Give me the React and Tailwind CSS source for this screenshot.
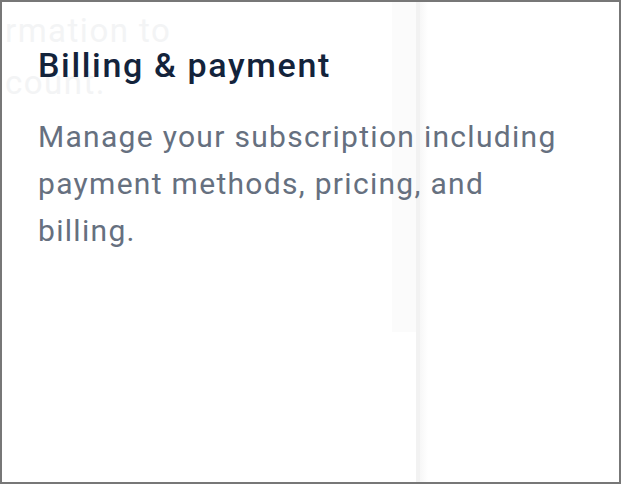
import React from "react";

const App = () => {
  return (
    <div
      className="relative w-[621px] h-[484px] overflow-hidden border-2 border-[#777777] bg-white"
      style={{ fontFamily: "Roboto, 'Noto Sans', sans-serif" }}
    >
      {/* faint leftovers of the previous slide */}
      <div className="absolute left-[390px] top-0 h-[330px] w-[24px] bg-[#fbfbfb]" />
      <div className="absolute left-[414px] top-0 h-full w-[4px] bg-[#f2f2f2]" />
      <div className="absolute left-[418px] top-0 h-full w-[8px] bg-gradient-to-r from-[#f7f7f7] to-white" />
      <div className="absolute left-[3px] top-[3px] text-[33px] leading-[52px] tracking-[1.5px] text-[#f3f4f5]">
        <p>rmation to</p>
        <p>count.</p>
      </div>

      <div className="relative flex flex-col gap-[28px] pl-[36px] pr-[38px] pt-[43px]">
        <h2 className="text-[34px] leading-[40px] font-medium tracking-[1.65px] text-[#13233b]">
          Billing &amp; payment
        </h2>
        <p className="text-[30px] leading-[47px] tracking-[1.3px] text-[#66707f]">
          Manage your subscription including payment methods, pricing, and
          billing.
        </p>
      </div>
    </div>
  );
};

export default App;
